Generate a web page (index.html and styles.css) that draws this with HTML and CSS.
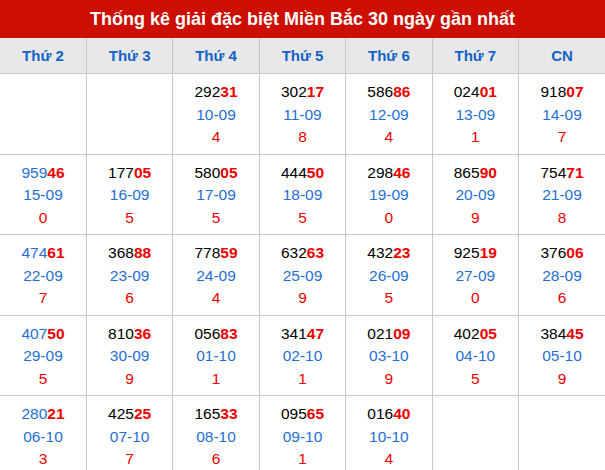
FILE: index.html
```html
<!DOCTYPE html>
<html lang="vi">
<head>
<meta charset="utf-8">
<title>Thống kê giải đặc biệt</title>
<link rel="stylesheet" href="styles.css">
</head>
<body>
<div class="title">Thống kê giải đặc biệt Miền Bắc 30 ngày gần nhất</div>
<table class="stats">
  <thead>
    <tr><th>Thứ 2</th><th>Thứ 3</th><th>Thứ 4</th><th>Thứ 5</th><th>Thứ 6</th><th>Thứ 7</th><th>CN</th></tr>
  </thead>
  <tbody>
    <tr>
      <td></td>
      <td></td>
      <td><div class="num">292<b>31</b></div><div class="date">10-09</div><div class="dig">4</div></td>
      <td><div class="num">302<b>17</b></div><div class="date">11-09</div><div class="dig">8</div></td>
      <td><div class="num">586<b>86</b></div><div class="date">12-09</div><div class="dig">4</div></td>
      <td><div class="num">024<b>01</b></div><div class="date">13-09</div><div class="dig">1</div></td>
      <td><div class="num">918<b>07</b></div><div class="date">14-09</div><div class="dig">7</div></td>
    </tr>
    <tr>
      <td class="first"><div class="num">959<b>46</b></div><div class="date">15-09</div><div class="dig">0</div></td>
      <td><div class="num">177<b>05</b></div><div class="date">16-09</div><div class="dig">5</div></td>
      <td><div class="num">580<b>05</b></div><div class="date">17-09</div><div class="dig">5</div></td>
      <td><div class="num">444<b>50</b></div><div class="date">18-09</div><div class="dig">5</div></td>
      <td><div class="num">298<b>46</b></div><div class="date">19-09</div><div class="dig">0</div></td>
      <td><div class="num">865<b>90</b></div><div class="date">20-09</div><div class="dig">9</div></td>
      <td><div class="num">754<b>71</b></div><div class="date">21-09</div><div class="dig">8</div></td>
    </tr>
    <tr>
      <td class="first"><div class="num">474<b>61</b></div><div class="date">22-09</div><div class="dig">7</div></td>
      <td><div class="num">368<b>88</b></div><div class="date">23-09</div><div class="dig">6</div></td>
      <td><div class="num">778<b>59</b></div><div class="date">24-09</div><div class="dig">4</div></td>
      <td><div class="num">632<b>63</b></div><div class="date">25-09</div><div class="dig">9</div></td>
      <td><div class="num">432<b>23</b></div><div class="date">26-09</div><div class="dig">5</div></td>
      <td><div class="num">925<b>19</b></div><div class="date">27-09</div><div class="dig">0</div></td>
      <td><div class="num">376<b>06</b></div><div class="date">28-09</div><div class="dig">6</div></td>
    </tr>
    <tr>
      <td class="first"><div class="num">407<b>50</b></div><div class="date">29-09</div><div class="dig">5</div></td>
      <td><div class="num">810<b>36</b></div><div class="date">30-09</div><div class="dig">9</div></td>
      <td><div class="num">056<b>83</b></div><div class="date">01-10</div><div class="dig">1</div></td>
      <td><div class="num">341<b>47</b></div><div class="date">02-10</div><div class="dig">1</div></td>
      <td><div class="num">021<b>09</b></div><div class="date">03-10</div><div class="dig">9</div></td>
      <td><div class="num">402<b>05</b></div><div class="date">04-10</div><div class="dig">5</div></td>
      <td><div class="num">384<b>45</b></div><div class="date">05-10</div><div class="dig">9</div></td>
    </tr>
    <tr>
      <td class="first"><div class="num">280<b>21</b></div><div class="date">06-10</div><div class="dig">3</div></td>
      <td><div class="num">425<b>25</b></div><div class="date">07-10</div><div class="dig">7</div></td>
      <td><div class="num">165<b>33</b></div><div class="date">08-10</div><div class="dig">6</div></td>
      <td><div class="num">095<b>65</b></div><div class="date">09-10</div><div class="dig">1</div></td>
      <td><div class="num">016<b>40</b></div><div class="date">10-10</div><div class="dig">4</div></td>
      <td></td>
      <td></td>
    </tr>
  </tbody>
</table>
</body>
</html>
```

FILE: styles.css
```css
html, body {
  margin: 0;
  padding: 0;
  background: #ffffff;
  font-family: "Liberation Sans", Arial, sans-serif;
}

.title {
  height: 38px;
  line-height: 38px;
  background: #cc0f00;
  color: #ffffff;
  font-weight: bold;
  font-size: 18px;
  text-align: center;
}

.stats {
  width: 605px;
  border-collapse: collapse;
  table-layout: fixed;
}

.stats th {
  height: 35px;
  padding: 0;
  background: #e8e8e8;
  color: #1262c8;
  font-size: 15px;
  font-weight: bold;
  text-align: center;
  border: 1px solid #c8c8c8;
}

.stats td {
  height: 67px;
  padding: 7px 0 5px;
  text-align: center;
  vertical-align: top;
  border: 1px solid #c8c8c8;
  font-size: 15.5px;
  line-height: 22.5px;
}

.stats tr > :first-child { border-left: none; }
.stats tr > :last-child { border-right: none; }
.stats thead th { border-top: none; }

.num { color: #000000; }
.num b { color: #ee0000; }
.first .num { color: #1f6fd6; }
.date { color: #1f6fd6; }
.dig { color: #ee0000; }
```
